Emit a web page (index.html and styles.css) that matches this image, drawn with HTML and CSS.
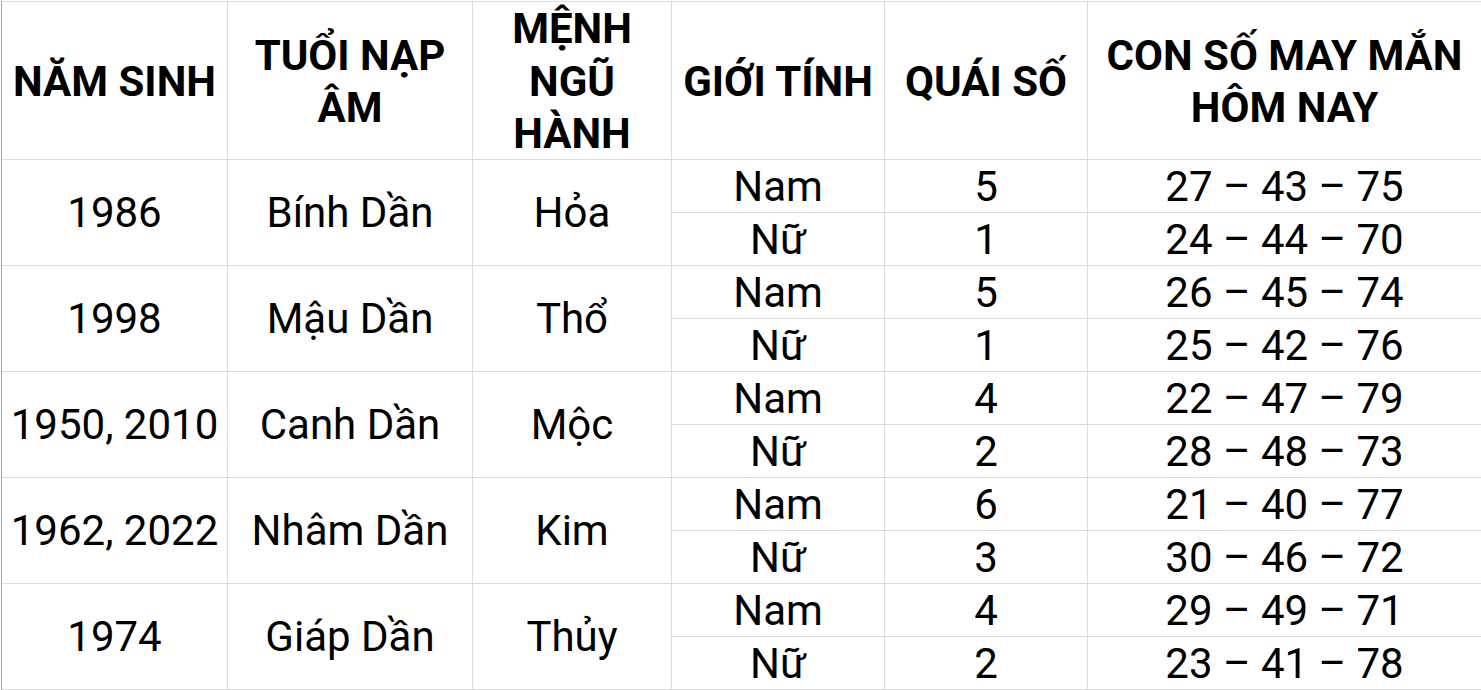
FILE: index.html
```html
<!DOCTYPE html>
<html lang="vi">
<head>
<meta charset="utf-8">
<title>Con số may mắn</title>
<link rel="stylesheet" href="styles.css">
</head>
<body>
<div class="sheet">
  <div class="hd">NĂM SINH</div>
  <div class="hd">TUỔI NẠP<br>ÂM</div>
  <div class="hd">MỆNH<br>NGŨ<br>HÀNH</div>
  <div class="hd">GIỚI TÍNH</div>
  <div class="hd">QUÁI SỐ</div>
  <div class="hd">CON SỐ MAY MẮN<br>HÔM NAY</div>

  <div class="c span2">1986</div><div class="c span2">Bính Dần</div><div class="c span2">Hỏa</div>
  <div class="c">Nam</div><div class="c">5</div><div class="c">27 – 43 – 75</div>
  <div class="c">Nữ</div><div class="c">1</div><div class="c">24 – 44 – 70</div>

  <div class="c span2">1998</div><div class="c span2">Mậu Dần</div><div class="c span2">Thổ</div>
  <div class="c">Nam</div><div class="c">5</div><div class="c">26 – 45 – 74</div>
  <div class="c">Nữ</div><div class="c">1</div><div class="c">25 – 42 – 76</div>

  <div class="c span2">1950, 2010</div><div class="c span2">Canh Dần</div><div class="c span2">Mộc</div>
  <div class="c">Nam</div><div class="c">4</div><div class="c">22 – 47 – 79</div>
  <div class="c">Nữ</div><div class="c">2</div><div class="c">28 – 48 – 73</div>

  <div class="c span2">1962, 2022</div><div class="c span2">Nhâm Dần</div><div class="c span2">Kim</div>
  <div class="c">Nam</div><div class="c">6</div><div class="c">21 – 40 – 77</div>
  <div class="c">Nữ</div><div class="c">3</div><div class="c">30 – 46 – 72</div>

  <div class="c span2">1974</div><div class="c span2">Giáp Dần</div><div class="c span2">Thủy</div>
  <div class="c">Nam</div><div class="c">4</div><div class="c">29 – 49 – 71</div>
  <div class="c">Nữ</div><div class="c">2</div><div class="c">23 – 41 – 78</div>
</div>
</body>
</html>
```
FILE: styles.css
```css
html, body {
  margin: 0;
  padding: 0;
  background: #ffffff;
}
body {
  font-family: Roboto, "Liberation Sans", sans-serif;
  color: #000;
}
.sheet {
  margin: 1px 0 0 1px;
  display: grid;
  grid-template-columns: 225px 244px 198px 212px 202px 393px;
  grid-template-rows: 157px repeat(10, 52px);
  gap: 1px;
  padding: 1px 0 1px 0;
  border-left: 1px solid #a6a6a6;
  background: #dadada;
  width: max-content;
}
.hd, .c {
  background: #fff;
  display: flex;
  align-items: center;
  justify-content: center;
  text-align: center;
  white-space: nowrap;
}
.hd {
  font-weight: 700;
  font-size: 42px;
  line-height: 52.5px;
  padding-top: 3px;
}
.c {
  font-size: 42px;
  line-height: 52px;
  padding-top: 1px;
}
.span2 {
  grid-row: span 2;
}
```
